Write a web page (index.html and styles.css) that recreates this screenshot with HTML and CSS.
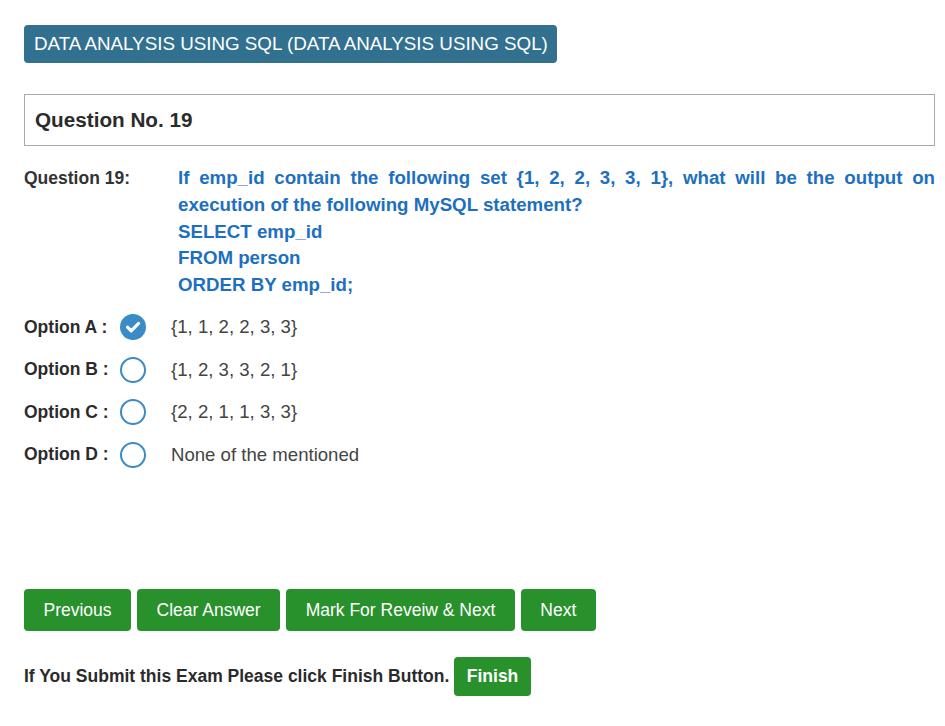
FILE: index.html
```html
<!DOCTYPE html>
<html>
<head>
<meta charset="utf-8">
<link rel="stylesheet" href="styles.css">
</head>
<body>
<div class="page">
  <div class="subject">DATA ANALYSIS USING SQL (DATA ANALYSIS USING SQL)</div>
  <div class="qhead">Question No. 19</div>
  <div class="question">
    <div class="qlabel">Question 19:</div>
    <div class="qtext">If emp_id contain the following set {1, 2, 2, 3, 3, 1}, what will be the output on execution of the following MySQL statement?<br>SELECT emp_id<br>FROM person<br>ORDER BY emp_id;</div>
  </div>
  <div class="options">
    <div class="option">
      <span class="olabel">Option A :</span>
      <span class="radio checked"><svg width="26" height="26" viewBox="0 0 26 26"><circle cx="13" cy="13" r="13" fill="#3b8bc6"/><path d="M7.5 13.2 L11.2 16.8 L18.6 9.4" fill="none" stroke="#fff" stroke-width="3.2" stroke-linecap="round" stroke-linejoin="round"/></svg></span>
      <span class="otext">{1, 1, 2, 2, 3, 3}</span>
    </div>
    <div class="option">
      <span class="olabel">Option B :</span>
      <span class="radio"><svg width="26" height="26" viewBox="0 0 26 26"><circle cx="13" cy="13" r="12" fill="#fff" stroke="#3b8bc6" stroke-width="2"/></svg></span>
      <span class="otext">{1, 2, 3, 3, 2, 1}</span>
    </div>
    <div class="option">
      <span class="olabel">Option C :</span>
      <span class="radio"><svg width="26" height="26" viewBox="0 0 26 26"><circle cx="13" cy="13" r="12" fill="#fff" stroke="#3b8bc6" stroke-width="2"/></svg></span>
      <span class="otext">{2, 2, 1, 1, 3, 3}</span>
    </div>
    <div class="option">
      <span class="olabel">Option D :</span>
      <span class="radio"><svg width="26" height="26" viewBox="0 0 26 26"><circle cx="13" cy="13" r="12" fill="#fff" stroke="#3b8bc6" stroke-width="2"/></svg></span>
      <span class="otext">None of the mentioned</span>
    </div>
  </div>
  <div class="actions">
    <button class="btn">Previous</button>
    <button class="btn">Clear Answer</button>
    <button class="btn">Mark For Reveiw &amp; Next</button>
    <button class="btn">Next</button>
  </div>
  <div class="finish">
    <span class="ftext">If You Submit this Exam Please click Finish Button.</span>
    <button class="btn fbtn">Finish</button>
  </div>
</div>
</body>
</html>
```

FILE: styles.css
```css
html, body {
  margin: 0;
  padding: 0;
  background: #fff;
}
body {
  font-family: "Liberation Sans", Arial, sans-serif;
  font-size: 17.5px;
  color: #333;
}
.page {
  width: 911px;
  padding: 25px 0 0 24px;
}
.subject {
  display: inline-block;
  height: 38px;
  line-height: 38px;
  padding: 0 9px 0 10px;
  background: #32708f;
  color: #fff;
  font-size: 18.8px;
  border-radius: 4px;
}
.qhead {
  margin-top: 31px;
  height: 50px;
  line-height: 50px;
  border: 1px solid #aaa8aa;
  padding: 0 10px;
  font-size: 20.7px;
  font-weight: bold;
  color: #2b2b2b;
}
.question {
  display: flex;
  margin-top: 19px;
  line-height: 26.75px;
  font-weight: bold;
}
.qlabel {
  width: 154px;
  flex: none;
  color: #333;
}
.qtext {
  flex: 1;
  color: #1d6fc0;
  font-size: 18.7px;
  text-align: justify;
}
.options {
  display: flex;
  flex-direction: column;
  margin-top: 7px;
}
.option {
  display: flex;
  align-items: center;
  height: 42.6px;
}
.olabel {
  width: 96px;
  font-weight: bold;
  color: #2b2b2b;
}
.radio {
  display: flex;
  width: 26px;
  height: 26px;
}
.otext {
  margin-left: 25px;
  font-size: 18.6px;
  color: #444;
}
.actions {
  display: flex;
  gap: 6px;
  margin-top: 113px;
}
.btn {
  font-family: "Liberation Sans", Arial, sans-serif;
  font-size: 17.5px;
  color: #fff;
  background: #28912c;
  border: none;
  border-radius: 4px;
  height: 42px;
  padding: 0 19.5px;
  cursor: pointer;
}
.finish {
  display: flex;
  align-items: center;
  margin-top: 26px;
}
.ftext {
  font-weight: bold;
  color: #2b2b2b;
}
.fbtn {
  height: 39px;
  margin-left: 5px;
  padding: 0 12.5px;
  font-weight: bold;
}
```
